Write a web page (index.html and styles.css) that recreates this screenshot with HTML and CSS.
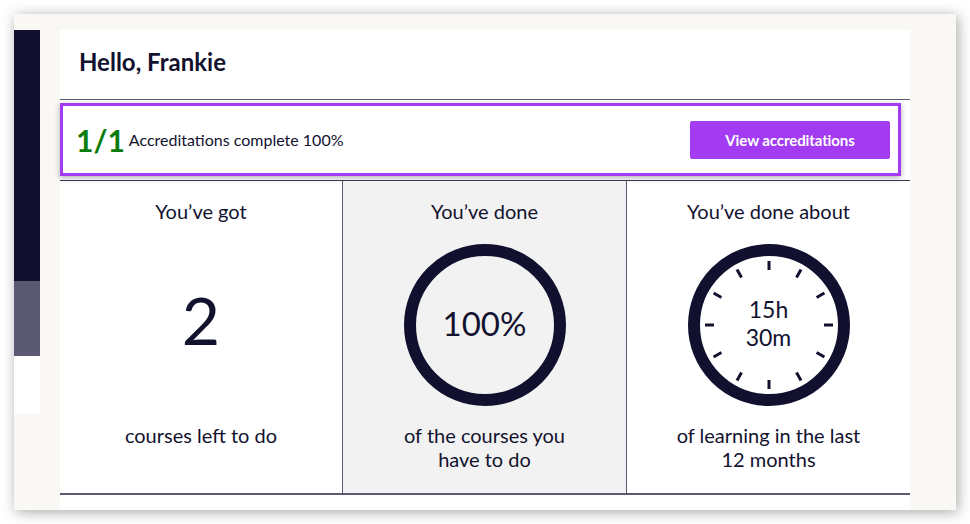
FILE: index.html
```html
<!DOCTYPE html>
<html lang="en">
<head>
<meta charset="utf-8">
<title>Dashboard</title>
<link rel="stylesheet" href="styles.css">
</head>
<body>
<div class="window">
  <aside class="sidebar">
    <div class="seg seg-dark"></div>
    <div class="seg seg-mid"></div>
    <div class="seg seg-light"></div>
  </aside>
  <main class="card">
    <header class="card-header">
      <h1 class="greeting">Hello, Frankie</h1>
    </header>
    <section class="accred">
      <span class="accred-count">1/1</span>
      <span class="accred-text">Accreditations complete 100%</span>
      <button class="accred-btn" type="button">View accreditations</button>
    </section>
    <section class="stats">
      <div class="stat">
        <div class="stat-title">You’ve got</div>
        <div class="stat-visual"><span class="big-num">2</span></div>
        <div class="stat-foot">courses left to do</div>
      </div>
      <div class="stat stat-shaded">
        <div class="stat-title">You’ve done</div>
        <div class="stat-visual">
          <svg class="ring" viewBox="0 0 164 164" width="164" height="164" aria-hidden="true">
            <circle cx="82" cy="82" r="75" fill="none" stroke="#11112f" stroke-width="12"/>
          </svg>
          <span class="ring-label">100%</span>
        </div>
        <div class="stat-foot">of the courses you<br>have to do</div>
      </div>
      <div class="stat">
        <div class="stat-title">You’ve done about</div>
        <div class="stat-visual">
          <svg class="ring" viewBox="0 0 164 164" width="164" height="164" aria-hidden="true">
            <circle cx="82" cy="82" r="75" fill="#fff" stroke="#11112f" stroke-width="12"/>
            <g stroke="#11112f" stroke-width="3">
              <line x1="82" y1="18" x2="82" y2="27"/>
              <line x1="82" y1="137" x2="82" y2="146"/>
              <line x1="18" y1="82" x2="27" y2="82"/>
              <line x1="137" y1="82" x2="146" y2="82"/>
              <line x1="114" y1="26.6" x2="109.5" y2="34.4"/>
              <line x1="137.4" y1="50" x2="129.6" y2="54.5"/>
              <line x1="137.4" y1="114" x2="129.6" y2="109.5"/>
              <line x1="114" y1="137.4" x2="109.5" y2="129.6"/>
              <line x1="50" y1="137.4" x2="54.5" y2="129.6"/>
              <line x1="26.6" y1="114" x2="34.4" y2="109.5"/>
              <line x1="26.6" y1="50" x2="34.4" y2="54.5"/>
              <line x1="50" y1="26.6" x2="54.5" y2="34.4"/>
            </g>
          </svg>
          <span class="clock-label">15h<br>30m</span>
        </div>
        <div class="stat-foot">of learning in the last<br>12 months</div>
      </div>
    </section>
  </main>
</div>
</body>
</html>
```

FILE: styles.css
```css
* { box-sizing: border-box; }

html, body {
  margin: 0;
  padding: 0;
  background: #ffffff;
}

body {
  font-family: "Lato", "Noto Sans", "Liberation Sans", sans-serif;
  color: #12122f;
}

.window {
  margin: 14px;
  width: 942px;
  height: 496px;
  background: #f9f8f4;
  box-shadow: 2px 2px 13px rgba(0, 0, 0, 0.35);
  display: flex;
  align-items: flex-start;
  gap: 20px;
  padding-top: 16px;
  overflow: hidden;
}

.sidebar {
  width: 26px;
  display: flex;
  flex-direction: column;
}

.seg-dark { height: 251px; background: #11112f; }
.seg-mid { height: 75px; background: #5b5a72; }
.seg-light { height: 58px; background: #ffffff; }

.card {
  width: 850px;
  height: 480px;
  background: #ffffff;
  display: flex;
  flex-direction: column;
}

.card-header {
  height: 70px;
  padding: 17px 19px 0;
  border-bottom: 1px solid #5b5a72;
}

.greeting {
  margin: 0;
  font-size: 24px;
  line-height: 30px;
  font-weight: 700;
  color: #12122f;
}

.accred {
  margin: 3px 9px 4px 0;
  height: 73px;
  border: 3px solid #a23bf2;
  box-shadow: 0 2px 6px rgba(0, 0, 0, 0.3);
  display: flex;
  align-items: center;
  padding: 0 8px 0 13px;
}

.accred-count {
  font-size: 30px;
  font-weight: 700;
  color: #0b7c0b;
  line-height: 1;
  margin-right: 4px;
}

.accred-text {
  font-size: 16px;
  color: #12122f;
}

.accred-btn {
  margin-left: auto;
  width: 200px;
  height: 38px;
  border: none;
  border-radius: 2px;
  background: #a23bf2;
  color: #ffffff;
  font-family: inherit;
  font-size: 15px;
  font-weight: 700;
  letter-spacing: -0.1px;
}

.stats {
  border-top: 1px solid #3a394c;
  border-bottom: 2px solid #5b5a72;
  display: grid;
  grid-template-columns: 282px 284px 284px;
  height: 315px;
}

.stat {
  display: flex;
  flex-direction: column;
  align-items: center;
  padding-top: 18px;
  text-align: center;
  font-size: 20px;
  line-height: 24px;
}

.stat + .stat { border-left: 1px solid #5b5a72; }

.stat-shaded { background: #f2f2f2; }

.stat-title { height: 24px; }

.stat-visual {
  margin-top: 20px;
  width: 164px;
  height: 164px;
  display: grid;
  place-items: center;
}

.stat-visual > * { grid-area: 1 / 1; }

.ring { display: block; }

.big-num {
  font-size: 66px;
  line-height: 1;
  padding-bottom: 10px;
}

.ring-label {
  font-size: 33px;
  line-height: 1;
  padding-bottom: 4px;
}

.clock-label {
  font-size: 23px;
  line-height: 28px;
  padding-bottom: 4px;
}

.stat-foot {
  margin-top: 16px;
}
```
